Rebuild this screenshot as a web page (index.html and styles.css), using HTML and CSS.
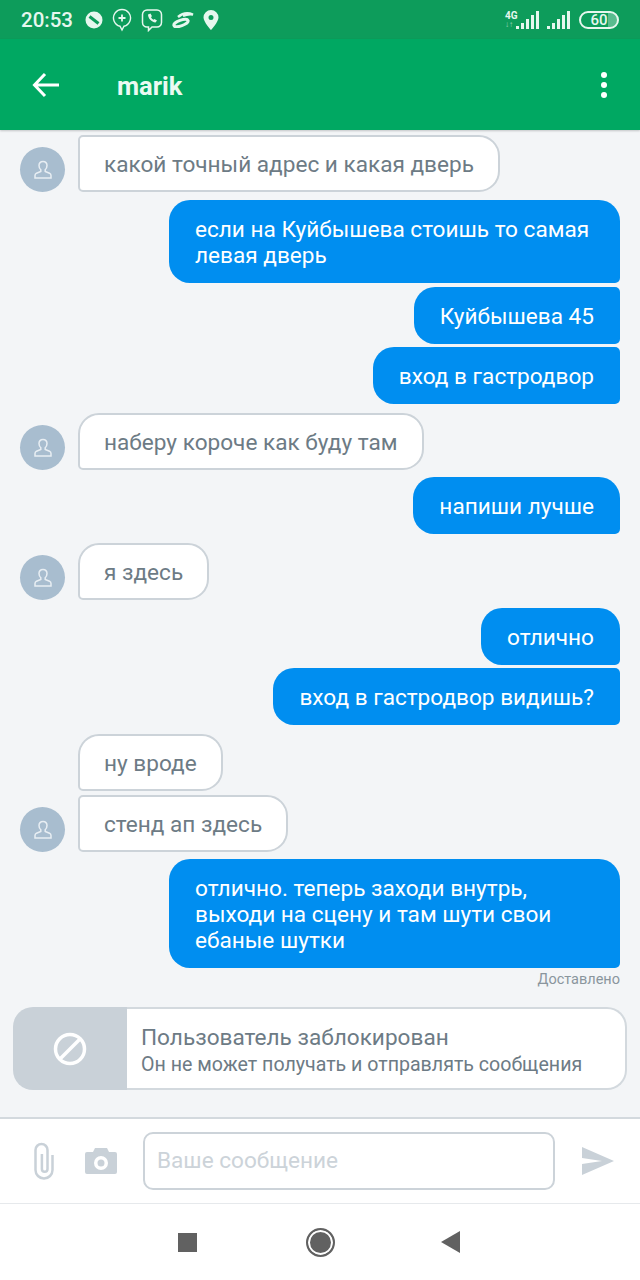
FILE: index.html
```html
<!DOCTYPE html>
<html lang="ru">
<head>
    <meta charset="UTF-8">
    <title>marik</title>
    <link rel="stylesheet" href="styles.css">
</head>
<body>
    <div class="phone">
        <div class="status-bar">
            <span class="clock">20:53</span>
            <div class="status-icons">
                <svg width="18" height="18" viewBox="0 0 18 18"><circle cx="9" cy="9" r="8.500" fill="#e6f7ee"/><path d="M4.500 5.500l9 7" stroke="#0d9c5b" stroke-width="3"/></svg>
                <svg width="20" height="24" viewBox="0 0 20 24" fill="none" stroke="#e6f7ee" stroke-width="1.400"><path d="M10 22l-2-3.800A8.500 8.500 0 1 1 12 18.200z"/><path d="M10 6.500v7M6.500 10h7" stroke-width="1.800"/></svg>
                <svg width="22" height="24" viewBox="0 0 22 24" fill="none" stroke="#e6f7ee" stroke-width="1.500"><path d="M6 2h10a4.500 4.500 0 0 1 4.500 4.500v8A4.500 4.500 0 0 1 16 19H11l-3.500 3.500V19H6a4.500 4.500 0 0 1-4.500-4.500v-8A4.500 4.500 0 0 1 6 2z"/><path d="M7 6.500c0 4 3.500 7.500 7.500 8l1.500-2-2.500-1.500-1 .8c-1-.5-2-1.500-2.500-2.800l1-.8L9.500 5.500z" fill="#e6f7ee" stroke="none"/></svg>
                <svg width="22" height="16" viewBox="0 0 22 16" fill="none" stroke="#e6f7ee"><ellipse cx="9" cy="11" rx="7.500" ry="2.800" transform="rotate(-20 9 11)" stroke-width="3"/><path d="M6 5c4-3.500 10-4.500 15-2.500-4-.5-7 0-10 1.500" stroke-width="2.400"/></svg>
                <svg width="16" height="20" viewBox="0 0 16 20"><path fill-rule="evenodd" d="M8 0a7.500 7.500 0 0 1 7.500 7.500C15.500 12 8 20 8 20S.5 12 .5 7.500A7.500 7.500 0 0 1 8 0zm0 5a2.500 2.500 0 1 0 0 5 2.500 2.500 0 0 0 0-5z" fill="#e6f7ee"/></svg>
            </div>
            <div class="status-right">
                <div class="net-label"><span>4G</span><small>↓↑</small></div>
                <div class="signal"><i class="b1"></i><i class="b2"></i><i class="b3"></i><i class="b4"></i><i class="b5"></i></div>
                <div class="signal second"><i class="b1"></i><i class="b2"></i><i class="b3"></i><i class="b4"></i><i class="b5"></i></div>
                <div class="battery"><span>60</span></div>
            </div>
        </div>

        <div class="app-bar">
            <svg class="back-icon" width="28" height="26" viewBox="0 0 28 26" fill="none" stroke="#fff" stroke-width="3"><path d="M27 13H3M13 2L2.500 13 13 24"/></svg>
            <span class="title">marik</span>
            <div class="dots"><i></i><i></i><i></i></div>
        </div>

        <div class="chat">
            <div class="row in">
                <div class="avatar"><svg width="18" height="20" viewBox="0 0 18 20" fill="none" stroke="#e8eef3" stroke-width="1.500"><path d="M9 1.500c-2.600 0-4 1.700-4 4 0 2 .8 3.300 1.800 4.200v1.800l-4.300 1.700c-1 .5-1.500 1.300-1.500 2.300v2.500h16v-2.500c0-1-.5-1.800-1.500-2.300l-4.300-1.700V9.700c1-.9 1.800-2.200 1.800-4.200 0-2.300-1.400-4-4-4z"/></svg></div>
                <div class="bubble">какой точный адрес и какая дверь</div>
            </div>
            <div class="row out group-start"><div class="bubble wide first">если на Куйбышева стоишь то самая левая дверь</div></div>
            <div class="row out"><div class="bubble">Куйбышева 45</div></div>
            <div class="row out tight"><div class="bubble">вход в гастродвор</div></div>
            <div class="row in group-start">
                <div class="avatar"><svg width="18" height="20" viewBox="0 0 18 20" fill="none" stroke="#e8eef3" stroke-width="1.500"><path d="M9 1.500c-2.600 0-4 1.700-4 4 0 2 .8 3.300 1.800 4.200v1.800l-4.300 1.700c-1 .5-1.500 1.300-1.500 2.300v2.500h16v-2.500c0-1-.5-1.800-1.500-2.300l-4.300-1.700V9.700c1-.9 1.800-2.200 1.800-4.200 0-2.300-1.400-4-4-4z"/></svg></div>
                <div class="bubble first">наберу короче как буду там</div>
            </div>
            <div class="row out group-start near"><div class="bubble first">напиши лучше</div></div>
            <div class="row in group-start">
                <div class="avatar"><svg width="18" height="20" viewBox="0 0 18 20" fill="none" stroke="#e8eef3" stroke-width="1.500"><path d="M9 1.500c-2.600 0-4 1.700-4 4 0 2 .8 3.300 1.800 4.200v1.800l-4.300 1.700c-1 .5-1.500 1.300-1.500 2.300v2.500h16v-2.500c0-1-.5-1.800-1.500-2.300l-4.300-1.700V9.700c1-.9 1.800-2.200 1.800-4.200 0-2.300-1.400-4-4-4z"/></svg></div>
                <div class="bubble first">я здесь</div>
            </div>
            <div class="row out group-start"><div class="bubble first">отлично</div></div>
            <div class="row out tight"><div class="bubble">вход в гастродвор видишь?</div></div>
            <div class="row in group-start no-avatar"><div class="bubble first">ну вроде</div></div>
            <div class="row in">
                <div class="avatar"><svg width="18" height="20" viewBox="0 0 18 20" fill="none" stroke="#e8eef3" stroke-width="1.500"><path d="M9 1.500c-2.600 0-4 1.700-4 4 0 2 .8 3.300 1.800 4.200v1.800l-4.300 1.700c-1 .5-1.500 1.300-1.500 2.300v2.500h16v-2.500c0-1-.5-1.800-1.500-2.300l-4.300-1.700V9.700c1-.9 1.800-2.200 1.800-4.200 0-2.300-1.400-4-4-4z"/></svg></div>
                <div class="bubble">стенд ап здесь</div>
            </div>
            <div class="row out group-start near"><div class="bubble wide first">отлично. теперь заходи внутрь, выходи на сцену и там шути свои ебаные шутки</div></div>
            <div class="delivered">Доставлено</div>
            <div class="blocked">
                <div class="blocked-icon"><svg width="34" height="34" viewBox="0 0 34 34" fill="none" stroke="#fff" stroke-width="3.500"><circle cx="17" cy="17" r="14.500"/><path d="M7 27L27 7"/></svg></div>
                <div class="blocked-text">
                    <div class="blocked-title">Пользователь заблокирован</div>
                    <div class="blocked-sub">Он не может получать и отправлять сообщения</div>
                </div>
            </div>
        </div>

        <div class="composer">
            <svg class="clip" width="20" height="38" viewBox="0 0 20 38" fill="none" stroke="#c9d1d8" stroke-width="2.500"><path d="M18.500 13v15a8.500 8.500 0 0 1-17 0V8a6 6 0 0 1 12 0v19a2.800 2.800 0 0 1-5.600 0V12"/></svg>
            <svg class="camera" width="34" height="30" viewBox="0 0 34 30"><path fill-rule="evenodd" d="M11 2h12l2 4h6a2 2 0 0 1 2 2v18a2 2 0 0 1-2 2H3a2 2 0 0 1-2-2V8a2 2 0 0 1 2-2h6zm6 8a7 7 0 1 0 0 14 7 7 0 0 0 0-14zm0 3.500a3.500 3.500 0 1 1 0 7 3.500 3.500 0 0 1 0-7z" fill="#c9d1d8"/></svg>
            <div class="input">Ваше сообщение</div>
            <svg class="send" width="34" height="30" viewBox="0 0 34 30"><path d="M1 1l32 14L1 29V18l20-3L1 12z" fill="#c9d1d8"/></svg>
        </div>

        <div class="nav-bar">
            <i class="nav-square"></i>
            <i class="nav-circle"></i>
            <svg class="nav-back" width="20" height="22" viewBox="0 0 20 22"><path d="M19 0v22L0 11z" fill="#616161"/></svg>
        </div>
    </div>
</body>
</html>
```

FILE: styles.css
```css
* { box-sizing: border-box; }
html, body { margin: 0; padding: 0; }
body { width: 640px; height: 1280px; overflow: hidden; font-family: Roboto, "Noto Sans", sans-serif; background: #fff; }
.phone { width: 640px; height: 1280px; display: flex; flex-direction: column; }

.status-bar { height: 39px; flex: none; background: #0d9c5b; color: #e6f7ee; display: flex; align-items: center; padding: 0 21px 0 21px; }
.clock { font-size: 20.5px; font-weight: 500; margin-right: 12px; }
.status-icons { display: flex; align-items: center; gap: 9px; }
.status-right { margin-left: auto; display: flex; align-items: flex-end; gap: 6px; height: 20px; padding-bottom: 1px; }
.net-label { width: 14px; margin-right: -9px; display: flex; flex-direction: column; line-height: 10px; font-size: 10px; font-weight: 700; }
.net-label small { font-size: 8px; line-height: 8px; opacity: 0.6; }
.signal { display: flex; align-items: flex-end; gap: 2px; height: 18px; }
.signal.second { margin-left: 2px; }
.signal i { display: block; width: 3px; background: #e6f7ee; }
.b1 { height: 3px; }
.b2 { height: 6px; }
.b3 { height: 10px; }
.b4 { height: 14px; }
.b5 { height: 18px; }
.battery { width: 40px; height: 18px; margin-left: 3px; border: 2px solid #e6f7ee; border-radius: 9px; font-size: 15px; font-weight: 500; line-height: 14px; text-align: center; background: linear-gradient(to right, transparent 75%, rgba(230,247,238,0.35) 75%); }

.app-bar { height: 91px; flex: none; background: #00a862; display: flex; align-items: center; padding: 0 33px 0 32px; color: #fff; position: relative; z-index: 1; box-shadow: 0 1px 2px rgba(0,0,0,0.2); }
.title { font-size: 25.5px; font-weight: 700; margin-left: 57px; padding-top: 2px; color: #eafaf2; }
.dots { margin-left: auto; display: flex; flex-direction: column; gap: 4px; }
.dots i { display: block; width: 6px; height: 6px; border-radius: 50%; background: #fff; }

.chat { height: 987px; flex: none; background: #f3f5f7; padding: 5px 20px 0; display: flex; flex-direction: column; overflow: hidden; }
.row { display: flex; margin-top: 4px; flex: none; }
.row:first-child { margin-top: 0; }
.row.tight { margin-top: 3px; }
.row.out.group-start { margin-top: 8px; }
.row.out.group-start.near { margin-top: 7px; }
.row.in.group-start { margin-top: 9px; }
.row.in { align-items: flex-end; gap: 13px; }
.row.in.no-avatar { padding-left: 58px; }
.row.out { justify-content: flex-end; }
.avatar { width: 45px; height: 45px; border-radius: 50%; background: #a8bdcf; display: flex; align-items: center; justify-content: center; flex: none; }
.bubble { font-size: 22.6px; line-height: 26px; padding: 16.5px 26px 14.5px; max-width: 451px; }
.in .bubble { background: #fff; color: #6d7b85; border: 2px solid #ccd3d9; border-radius: 5px 21px 21px 5px; padding: 14.5px 24px 12.5px; }
.out .bubble { background: #008ef0; color: #fff; border-radius: 21px 5px 5px 21px; }
.in .bubble.first { border-top-left-radius: 21px; }
.out .bubble.first { border-top-right-radius: 21px; }
.bubble.wide { width: 451px; }
.delivered { text-align: right; font-size: 14.5px; line-height: 16px; color: #8a959d; margin-top: 4px; flex: none; }

.blocked { height: 83px; flex: none; margin: 19px -7px 0; display: flex; }
.blocked-icon { width: 114px; background: #c9d1d8; border-radius: 20px 0 0 20px; display: flex; align-items: center; justify-content: center; flex: none; }
.blocked-text { flex: 1; background: #fff; border: 2px solid #d3d9de; border-left: none; border-radius: 0 20px 20px 0; padding: 15px 14px 0; color: #6d7b85; }
.blocked-title { font-size: 22.6px; line-height: 28px; }
.blocked-sub { font-size: 19.6px; line-height: 26px; }

.composer { height: 87px; flex: none; background: #fff; border-top: 2px solid #d3d9de; border-bottom: 1px solid #e6e9ec; display: flex; align-items: center; padding: 0 24px 0 34px; }
.camera { margin-left: 30px; }
.input { width: 412px; height: 58px; margin-left: 25px; border: 2px solid #ccd3d9; border-radius: 10px; font-size: 22.6px; line-height: 54px; padding-left: 12px; color: #ccd3d9; }
.send { margin-left: 26px; }

.nav-bar { height: 76px; flex: none; background: #fff; display: flex; align-items: center; padding-left: 178px; gap: 109px; }
.nav-square { display: block; width: 19px; height: 19px; background: #616161; }
.nav-circle { display: block; width: 29px; height: 29px; border-radius: 50%; background: #616161; border: 2px solid #616161; box-shadow: inset 0 0 0 2px #fff; }
.nav-back { margin-left: -3px; }
```
